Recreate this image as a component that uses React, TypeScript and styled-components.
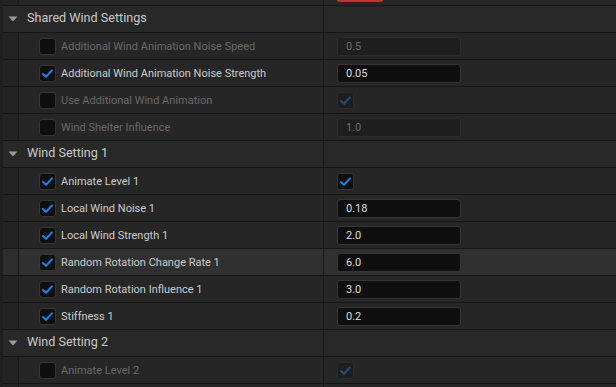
import React from "react";
import styled, { createGlobalStyle } from "styled-components";

const Global = createGlobalStyle`
  html, body { margin: 0; padding: 0; background: #1d1d1d; }
  body { font-family: Roboto, "Noto Sans", "Liberation Sans", sans-serif; }
  * { box-sizing: border-box; }
`;

const Panel = styled.div`
  width: 616px;
  height: 387px;
  overflow: hidden;
  display: flex;
  background: #1d1d1d;
`;

const Gutter = styled.div`
  flex: 0 0 3px;
  background: #1f1f1f;
`;

const List = styled.div`
  flex: 1;
  display: flex;
  flex-direction: column;
`;

const Row = styled.div<{ $h: number; $hi?: boolean; $header?: boolean }>`
  flex: 0 0 auto;
  height: ${(p) => p.$h}px;
  display: flex;
  border-bottom: 1px solid #161616;
  background: ${(p) => (p.$hi ? "#303030" : p.$header ? "#282828" : "#262626")};
  overflow: hidden;
`;

const Indent = styled.div<{ $hi?: boolean }>`
  flex: 0 0 16px;
  background: ${(p) => (p.$hi ? "#2d2d2d" : "#232323")};
  border-right: 1px solid #1a1a1a;
`;

const NameCell = styled.div`
  flex: 0 0 305px;
  display: flex;
  align-items: center;
  padding-left: 20px;
  gap: 5px;
  border-right: 1px solid #1a1a1a;
`;

const HeaderCell = styled.div`
  flex: 0 0 321px;
  display: flex;
  align-items: center;
  padding-left: 5px;
  gap: 9px;
  border-right: 1px solid #1a1a1a;
`;

const ValueCell = styled.div<{ $top?: boolean }>`
  flex: 1;
  display: flex;
  align-items: ${(p) => (p.$top ? "flex-start" : "center")};
  padding-left: 13px;
`;

const HeaderTitle = styled.span`
  font-size: 12.6px;
  color: #c8c8c8;
  white-space: nowrap;
  line-height: 1;
  margin-top: -1px;
`;

const Label = styled.span<{ $on: boolean }>`
  font-size: 11px;
  color: ${(p) => (p.$on ? "#cccccc" : "#686868")};
  white-space: nowrap;
  line-height: 1;
`;

const Box = styled.div<{ $dim?: boolean }>`
  width: 17px;
  height: 17px;
  border-radius: 3px;
  background: ${(p) => (p.$dim ? "#1e1e1e" : "#0f0f0f")};
  border: 1px solid ${(p) => (p.$dim ? "#2b2b2b" : "#353535")};
  display: flex;
  align-items: center;
  justify-content: center;
`;

const Input = styled.div<{ $on: boolean }>`
  width: 124px;
  height: 19px;
  border-radius: 3px;
  background: ${(p) => (p.$on ? "#0f0f0f" : "#1e1e1e")};
  border: 1px solid ${(p) => (p.$on ? "#353535" : "#2c2c2c")};
  color: ${(p) => (p.$on ? "#dedede" : "#6c6c6c")};
  font-size: 11px;
  display: flex;
  align-items: center;
  padding-left: 8px;
  line-height: 1;
`;

const RedButton = styled.div`
  width: 46px;
  height: 2px;
  background: #c4303a;
  border-radius: 0 0 3px 3px;
  box-shadow: 0 1px 0 #3a1515;
`;

const Check = ({ dim }: { dim?: boolean }) => (
  <svg width="13" height="13" viewBox="0 0 13 13">
    <path
      d="M2 7 L5 9.8 L11 3.4"
      fill="none"
      stroke={dim ? "#1f4d80" : "#1b7ff0"}
      strokeWidth="2.1"
      strokeLinecap="round"
      strokeLinejoin="round"
    />
  </svg>
);

const Triangle = () => (
  <svg width="10" height="6" viewBox="0 0 10 6">
    <path d="M0.5 0.5 L9.5 0.5 L5 5.5 Z" fill="#9a9a9a" />
  </svg>
);

type Val = { kind: "num"; text: string } | { kind: "bool" };
type Prop = { label: string; on: boolean; val: Val; hi?: boolean };
type Section = { title: string; rows: Prop[] };

const sections: Section[] = [
  {
    title: "Shared Wind Settings",
    rows: [
      { label: "Additional Wind Animation Noise Speed", on: false, val: { kind: "num", text: "0.5" } },
      { label: "Additional Wind Animation Noise Strength", on: true, val: { kind: "num", text: "0.05" } },
      { label: "Use Additional Wind Animation", on: false, val: { kind: "bool" } },
      { label: "Wind Shelter Influence", on: false, val: { kind: "num", text: "1.0" } },
    ],
  },
  {
    title: "Wind Setting 1",
    rows: [
      { label: "Animate Level 1", on: true, val: { kind: "bool" } },
      { label: "Local Wind Noise 1", on: true, val: { kind: "num", text: "0.18" } },
      { label: "Local Wind Strength 1", on: true, val: { kind: "num", text: "2.0" } },
      { label: "Random Rotation Change Rate 1", on: true, val: { kind: "num", text: "6.0" }, hi: true },
      { label: "Random Rotation Influence 1", on: true, val: { kind: "num", text: "3.0" } },
      { label: "Stiffness 1", on: true, val: { kind: "num", text: "0.2" } },
    ],
  },
  {
    title: "Wind Setting 2",
    rows: [{ label: "Animate Level 2", on: false, val: { kind: "bool" } }],
  },
];

const PropRow = ({ p }: { p: Prop }) => (
  <Row $h={27} $hi={p.hi}>
    <Indent $hi={p.hi} />
    <NameCell>
      <Box>{p.on && <Check />}</Box>
      <Label $on={p.on}>{p.label}</Label>
    </NameCell>
    <ValueCell>
      {p.val.kind === "num" ? (
        <Input $on={p.on}>{p.val.text}</Input>
      ) : (
        <Box $dim={!p.on}>
          <Check dim={!p.on} />
        </Box>
      )}
    </ValueCell>
  </Row>
);

export default function App() {
  return (
    <>
      <Global />
      <Panel>
        <Gutter />
        <List>
          <Row $h={6}>
            <Indent />
            <NameCell />
            <ValueCell $top>
              <RedButton />
            </ValueCell>
          </Row>
          {sections.map((s) => (
            <React.Fragment key={s.title}>
              <Row $h={27} $header>
                <HeaderCell>
                  <Triangle />
                  <HeaderTitle>{s.title}</HeaderTitle>
                </HeaderCell>
                <ValueCell />
              </Row>
              {s.rows.map((r) => (
                <PropRow key={r.label} p={r} />
              ))}
            </React.Fragment>
          ))}
          <Row $h={27}>
            <Indent />
            <NameCell />
            <ValueCell />
          </Row>
        </List>
      </Panel>
    </>
  );
}
